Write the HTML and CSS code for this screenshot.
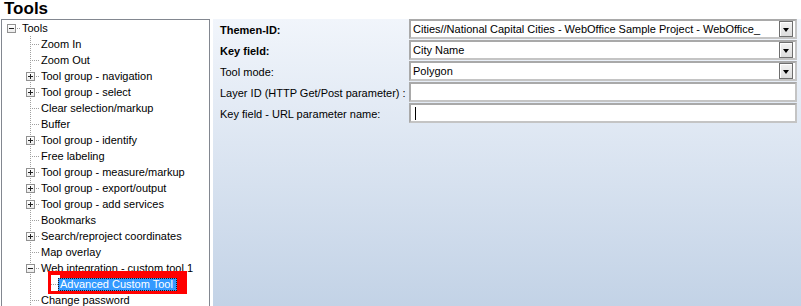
FILE: index.html
```html
<!DOCTYPE html>
<html>
<head>
<meta charset="utf-8">
<link rel="stylesheet" href="styles.css">
</head>
<body>
<h1 class="title">Tools</h1>
<div class="main">
  <div class="tree">
    <div class="node"><span class="tw"><span class="box minus"></span><span class="conn short"></span></span><span class="lbl">Tools</span></div>
    <div class="kids k1">
      <div class="node l1"><span class="tw"><span class="conn"></span></span><span class="lbl">Zoom In</span></div>
      <div class="node l1"><span class="tw"><span class="conn"></span></span><span class="lbl">Zoom Out</span></div>
      <div class="node l1"><span class="tw"><span class="box plus"></span><span class="conn short"></span></span><span class="lbl">Tool group - navigation</span></div>
      <div class="node l1"><span class="tw"><span class="box plus"></span><span class="conn short"></span></span><span class="lbl">Tool group - select</span></div>
      <div class="node l1"><span class="tw"><span class="conn"></span></span><span class="lbl">Clear selection/markup</span></div>
      <div class="node l1"><span class="tw"><span class="conn"></span></span><span class="lbl">Buffer</span></div>
      <div class="node l1"><span class="tw"><span class="box plus"></span><span class="conn short"></span></span><span class="lbl">Tool group - identify</span></div>
      <div class="node l1"><span class="tw"><span class="conn"></span></span><span class="lbl">Free labeling</span></div>
      <div class="node l1"><span class="tw"><span class="box plus"></span><span class="conn short"></span></span><span class="lbl">Tool group - measure/markup</span></div>
      <div class="node l1"><span class="tw"><span class="box plus"></span><span class="conn short"></span></span><span class="lbl">Tool group - export/output</span></div>
      <div class="node l1"><span class="tw"><span class="box plus"></span><span class="conn short"></span></span><span class="lbl">Tool group - add services</span></div>
      <div class="node l1"><span class="tw"><span class="conn"></span></span><span class="lbl">Bookmarks</span></div>
      <div class="node l1"><span class="tw"><span class="box plus"></span><span class="conn short"></span></span><span class="lbl">Search/reproject coordinates</span></div>
      <div class="node l1"><span class="tw"><span class="conn"></span></span><span class="lbl">Map overlay</span></div>
      <div class="node l1"><span class="tw"><span class="box minus"></span><span class="conn short"></span></span><span class="lbl">Web integration - custom tool 1</span></div>
      <div class="kids k2">
        <div class="node l2 marked"><span class="mark"></span><span class="tw"><span class="conn"></span></span><span class="lbl sel">Advanced Custom Tool</span></div>
      </div>
      <div class="node l1"><span class="tw"><span class="conn"></span></span><span class="lbl">Change password</span></div>
    </div>
  </div>
  <div class="panel">
    <div class="form">
      <div class="lab b">Themen-ID:</div>
      <div class="field combo"><span class="val">Cities//National Capital Cities - WebOffice Sample Project - WebOffice_</span><span class="btn"></span></div>
      <div class="lab b">Key field:</div>
      <div class="field combo"><span class="val">City Name</span><span class="btn"></span></div>
      <div class="lab">Tool mode:</div>
      <div class="field combo"><span class="val">Polygon</span><span class="btn"></span></div>
      <div class="lab">Layer ID (HTTP Get/Post parameter) :</div>
      <div class="field"><span class="val"></span></div>
      <div class="lab">Key field - URL parameter name:</div>
      <div class="field"><span class="val"><span class="caret"></span></span></div>
    </div>
  </div>
</div>
</body>
</html>
```

FILE: styles.css
```css
html, body {
  margin: 0;
  padding: 0;
  background: #ffffff;
  overflow: hidden;
}
body {
  font-family: "Liberation Sans", Arial, sans-serif;
  font-size: 11px;
  color: #000;
  width: 801px;
  height: 306px;
}
.title {
  margin: 0;
  height: 19px;
  padding-left: 4px;
  font-size: 17px;
  font-weight: bold;
  line-height: 17px;
  overflow: hidden;
}
.main {
  display: flex;
  height: 291px;
  gap: 3px;
}
.tree {
  width: 207px;
  margin-left: 1px;
  border: 1px solid #828790;
  border-bottom: none;
  background: #fff;
  overflow: hidden;
}
.node {
  display: flex;
  align-items: center;
  height: 16px;
  white-space: nowrap;
}
.node.l1 { padding-left: 19px; }
.node.l2 { padding-left: 38px; }
.marked { position: relative; }
.tw {
  width: 19px;
  height: 16px;
  flex: none;
  display: flex;
  align-items: center;
}
.box {
  width: 7px;
  height: 7px;
  border: 1px solid #919191;
  background: linear-gradient(#ffffff, #ebebeb);
  margin-left: 5px;
  flex: none;
  position: relative;
}
.box.minus::before, .box.plus::before {
  content: "";
  position: absolute;
  left: 1px;
  top: 3px;
  width: 5px;
  height: 1px;
  background: #222;
}
.box.plus::after {
  content: "";
  position: absolute;
  left: 3px;
  top: 1px;
  width: 1px;
  height: 5px;
  background: #222;
}
.conn {
  height: 1px;
  width: 10px;
  margin-left: 9px;
  background-image: linear-gradient(to right, #a0a0a0 50%, transparent 50%);
  background-size: 2px 1px;
}
.conn.short {
  width: 5px;
  margin-left: 0;
  background-position: 1px 0;
}
.lbl {
  padding: 0 2px 0 1px;
  line-height: 14px;
}
.kids {
  background-image: linear-gradient(to bottom, #a0a0a0 50%, transparent 50%);
  background-size: 1px 2px;
  background-repeat: repeat-y;
}
.k1 { background-position: 28px 0; }
.k2 {
  background-image: linear-gradient(to bottom, #a0a0a0 50%, transparent 50%), linear-gradient(to bottom, #a0a0a0 50%, transparent 50%);
  background-size: 1px 2px, 1px 2px;
  background-repeat: repeat-y, repeat-y;
  background-position: 28px 0, 47px 0;
}
.lbl.sel {
  position: relative;
  z-index: 2;
  background: #3399ff;
  color: #fff;
  outline: 1px dotted #1a1a1a;
  outline-offset: -1px;
  padding: 0 4px 0 2px;
  line-height: 13px;
  margin-left: -1px;
}
.mark {
  position: absolute;
  left: 46px;
  top: -5px;
  width: 132px;
  height: 16px;
  border-style: solid;
  border-color: #ff0000;
  border-width: 4px 4px 3px 3px;
  z-index: 1;
  background: linear-gradient(to right, transparent 9px, #ff0000 9px);
}
.panel {
  flex: 1;
  background: linear-gradient(#f1f5fb, #c2d2e6);
}
.form {
  display: grid;
  grid-template-columns: 196px 1fr;
  grid-auto-rows: 20px;
  row-gap: 1px;
  margin-right: 4px;
}
.lab {
  padding-left: 7px;
  display: flex;
  align-items: center;
  padding-top: 2px;
  white-space: nowrap;
}
.lab.b { font-weight: bold; }
.field {
  background: #fff;
  border: 2px solid #b6b6b6;
  border-color: #a9a9a9 #c4c4c4 #c4c4c4 #a9a9a9;
  display: flex;
  align-items: center;
  padding-left: 2px;
  padding-right: 2px;
}
.val {
  flex: 1;
  white-space: nowrap;
  overflow: hidden;
}
.btn {
  width: 12px;
  height: 14px;
  flex: none;
  border: 1px solid #6f6f6f;
  background: linear-gradient(#f2f2f2, #dcdcdc);
  box-shadow: inset 1px 1px 0 #fff;
  display: flex;
  align-items: center;
  justify-content: center;
}
.btn::before {
  content: "";
  width: 0;
  height: 0;
  border-left: 3.5px solid transparent;
  border-right: 3.5px solid transparent;
  border-top: 4px solid #000;
  margin-top: 1px;
}
.caret {
  display: inline-block;
  width: 1px;
  height: 13px;
  background: #000;
  margin-left: 2px;
  vertical-align: middle;
}
```
